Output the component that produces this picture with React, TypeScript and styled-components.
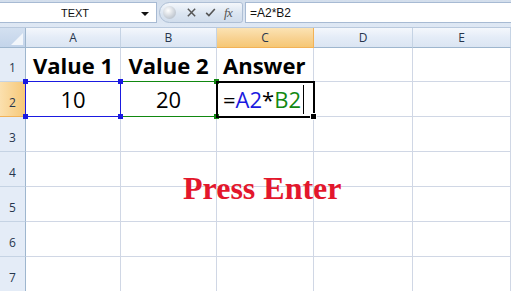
import styled, { createGlobalStyle } from 'styled-components';

const GlobalStyle = createGlobalStyle`
  html, body {
    margin: 0;
    padding: 0;
    width: 511px;
    height: 291px;
    overflow: hidden;
    background: #fff;
  }
`;

const columns = ['A', 'B', 'C', 'D', 'E'];
const colWidths = '26px 95px 96px 97px 99px 98px';

type CellValue = { text?: string; bold?: boolean; align?: string };

const headerRow: CellValue[] = [
  { text: 'Value 1', bold: true },
  { text: 'Value 2', bold: true },
  { text: 'Answer', bold: true, align: 'left' },
  {},
  {},
];

const emptyRows = [3, 4, 5, 6, 7];
const corners = ['tl', 'tr', 'bl', 'br'] as const;

const Range = ({ color, z }: { color: string; z: number }) => (
  <Styled.RangeBox $color={color} $z={z}>
    {corners.map((c) => (
      <Styled.Handle key={c} $color={color} $pos={c} />
    ))}
  </Styled.RangeBox>
);

const App = () => {
  return (
    <Styled.Page>
      <GlobalStyle />
      <Styled.FormulaBar>
        <Styled.NameBox>
          <span>TEXT</span>
          <Styled.DropArrow />
        </Styled.NameBox>
        <Styled.Pill>
          <Styled.Knob />
          <Styled.PillIcon viewBox="0 0 12 12">
            <path d="M2 2 L10 10 M10 2 L2 10" stroke="#555" strokeWidth="1.6" fill="none" />
          </Styled.PillIcon>
          <Styled.PillIcon viewBox="0 0 14 12">
            <path d="M1.5 6.5 L5 10 L12.5 1.5" stroke="#555" strokeWidth="2" fill="none" />
          </Styled.PillIcon>
          <Styled.Fx>fx</Styled.Fx>
        </Styled.Pill>
        <Styled.FormulaInput>=A2*B2</Styled.FormulaInput>
      </Styled.FormulaBar>

      <Styled.Sheet>
        <Styled.Corner>
          <svg width="12" height="12" viewBox="0 0 12 12">
            <path d="M12 0 L12 12 L0 12 Z" fill="#f2f6fb" />
          </svg>
        </Styled.Corner>
        {columns.map((c) => (
          <Styled.ColHeader key={c} $active={c === 'C'}>{c}</Styled.ColHeader>
        ))}

        <Styled.RowHeader>1</Styled.RowHeader>
        {headerRow.map((cell, i) => (
          <Styled.Cell key={i} $bold={cell.bold} $align={cell.align}>
            {cell.text}
          </Styled.Cell>
        ))}

        <Styled.RowHeader $active>2</Styled.RowHeader>
        <Styled.Cell $middle>
          10
          <Range color="#1a1ae0" z={3} />
        </Styled.Cell>
        <Styled.Cell $middle>
          20
          <Range color="#118811" z={2} />
        </Styled.Cell>
        <Styled.Cell $middle $align="left">
          <span>=</span>
          <Styled.Ref $color="#1a1ae0">A2</Styled.Ref>
          <span>*</span>
          <Styled.Ref $color="#118811">B2</Styled.Ref>
          <Styled.Caret />
          <Styled.ActiveBox />
        </Styled.Cell>
        <Styled.Cell />
        <Styled.Cell />

        {emptyRows.map((n) => (
          <Styled.Row key={n}>
            <Styled.RowHeader>{n}</Styled.RowHeader>
            {columns.map((c) => (
              <Styled.Cell key={c} />
            ))}
          </Styled.Row>
        ))}

        <Styled.Note>Press Enter</Styled.Note>
      </Styled.Sheet>
    </Styled.Page>
  );
};

export default App;

const handlePos = {
  tl: 'left: -3px; top: -3px;',
  tr: 'right: -3px; top: -3px;',
  bl: 'left: -3px; bottom: -3px;',
  br: 'right: -3px; bottom: -3px;',
};

const Styled = {
  Page: styled.div`
    width: 511px;
    height: 291px;
    overflow: hidden;
    background: #dde7f3;
    font-family: 'Open Sans', 'Liberation Sans', sans-serif;
  `,
  FormulaBar: styled.div`
    height: 28px;
    box-sizing: border-box;
    padding: 2px 0 4px;
    display: flex;
    align-items: stretch;
    gap: 2px;
    background: linear-gradient(#d3deec, #dfe8f4);
    border-bottom: 1px solid #b9c9dd;
  `,
  NameBox: styled.div`
    width: 157px;
    box-sizing: border-box;
    background: #fff;
    border: 1px solid #a7bad3;
    border-left: none;
    display: flex;
    align-items: center;
    justify-content: center;
    position: relative;
    font-family: 'Liberation Sans', Arial, sans-serif;
    font-size: 11px;
    color: #111;
    padding-right: 6px;
  `,
  DropArrow: styled.span`
    position: absolute;
    right: 7px;
    top: 9px;
    width: 0;
    height: 0;
    border-left: 4px solid transparent;
    border-right: 4px solid transparent;
    border-top: 4px solid #111;
  `,
  Pill: styled.div`
    width: 84px;
    box-sizing: border-box;
    border: 1px solid #aebfd5;
    border-radius: 11px 3px 3px 11px;
    background: linear-gradient(#f4f7fb, #dbe5f1 55%, #d1ddec);
    display: flex;
    align-items: center;
    padding-left: 3px;
    gap: 8px;
  `,
  Knob: styled.span`
    width: 13px;
    height: 13px;
    border-radius: 50%;
    background: radial-gradient(circle at 40% 35%, #ffffff, #c9cfd7 60%, #a9b2bd);
    margin-right: 2px;
  `,
  PillIcon: styled.svg`
    width: 11px;
    height: 11px;
  `,
  Fx: styled.span`
    font-family: 'Liberation Serif', 'Times New Roman', serif;
    font-style: italic;
    font-size: 13px;
    color: #555;
    letter-spacing: -0.5px;
  `,
  FormulaInput: styled.div`
    flex: 1;
    background: #fff;
    border: 1px solid #a7bad3;
    border-right: none;
    display: flex;
    align-items: center;
    padding-left: 4px;
    font-family: 'Liberation Sans', Arial, sans-serif;
    font-size: 12px;
    color: #111;
  `,
  Sheet: styled.div`
    position: relative;
    display: grid;
    grid-template-columns: ${colWidths};
    grid-template-rows: 20px 34px repeat(6, 35px);
    background: #fff;
  `,
  Corner: styled.div`
    background: linear-gradient(#d3e0f0, #c3d4ea);
    border-right: 1px solid #9eb6ce;
    border-bottom: 1px solid #9eb6ce;
    box-sizing: border-box;
    display: flex;
    align-items: flex-end;
    justify-content: flex-end;
    padding: 0 2px 2px 0;
  `,
  ColHeader: styled.div<{ $active?: boolean }>`
    box-sizing: border-box;
    display: flex;
    align-items: center;
    justify-content: center;
    font-size: 12px;
    color: #27364d;
    border-right: 1px solid ${(p) => (p.$active ? '#f2b257' : '#c5d3e4')};
    border-bottom: 1px solid ${(p) => (p.$active ? '#f2b257' : '#9eb6ce')};
    background: ${(p) =>
      p.$active
        ? 'linear-gradient(#fbe3b4, #f8d394 50%, #f6c774)'
        : 'linear-gradient(#f4f7fc, #e4ecf7 50%, #dbe5f2)'};
  `,
  Row: styled.div`
    display: contents;
  `,
  RowHeader: styled.div<{ $active?: boolean }>`
    box-sizing: border-box;
    display: flex;
    align-items: flex-end;
    justify-content: center;
    padding-bottom: 5px;
    font-size: 12px;
    color: #27364d;
    border-right: 1px solid #9eb6ce;
    border-bottom: 1px solid ${(p) => (p.$active ? '#f2b257' : '#c5d3e4')};
    background: ${(p) => (p.$active ? 'linear-gradient(90deg, #fbe0ae, #f6c878)' : '#e4ecf7')};
  `,
  Cell: styled.div<{ $bold?: boolean; $align?: string; $middle?: boolean }>`
    position: relative;
    box-sizing: border-box;
    border-right: 1px solid #d0d7e5;
    border-bottom: 1px solid #d0d7e5;
    display: flex;
    align-items: ${(p) => (p.$middle ? 'center' : 'flex-end')};
    justify-content: ${(p) => (p.$align === 'left' ? 'flex-start' : 'center')};
    padding-bottom: ${(p) => (p.$middle ? '0' : '1px')};
    padding-left: ${(p) => (p.$align === 'left' ? '6px' : '0')};
    font-size: 22px;
    font-weight: ${(p) => (p.$bold ? 700 : 400)};
    color: #000;
    white-space: nowrap;
  `,
  Ref: styled.span<{ $color: string }>`
    color: ${(p) => p.$color};
  `,
  Caret: styled.span`
    width: 1px;
    height: 29px;
    background: #000;
    margin-left: 2px;
  `,
  RangeBox: styled.span<{ $color: string; $z: number }>`
    position: absolute;
    left: -1px;
    top: -1px;
    right: -1px;
    bottom: -1px;
    border: 1px solid ${(p) => p.$color};
    z-index: ${(p) => p.$z};
    pointer-events: none;
  `,
  Handle: styled.span<{ $color: string; $pos: keyof typeof handlePos }>`
    position: absolute;
    width: 5px;
    height: 5px;
    background: ${(p) => p.$color};
    ${(p) => handlePos[p.$pos]}
  `,
  ActiveBox: styled.span`
    position: absolute;
    left: -1px;
    top: -1px;
    right: -2px;
    bottom: -2px;
    border: 2px solid #000;
    z-index: 4;
    &::after {
      content: '';
      position: absolute;
      right: -4px;
      bottom: -4px;
      width: 5px;
      height: 5px;
      background: #000;
      border: 1px solid #fff;
    }
  `,
  Note: styled.div`
    position: absolute;
    left: 183px;
    top: 142px;
    font-family: 'Liberation Serif', 'Times New Roman', serif;
    font-weight: 700;
    font-size: 32px;
    color: #e3172c;
    white-space: nowrap;
  `,
};
